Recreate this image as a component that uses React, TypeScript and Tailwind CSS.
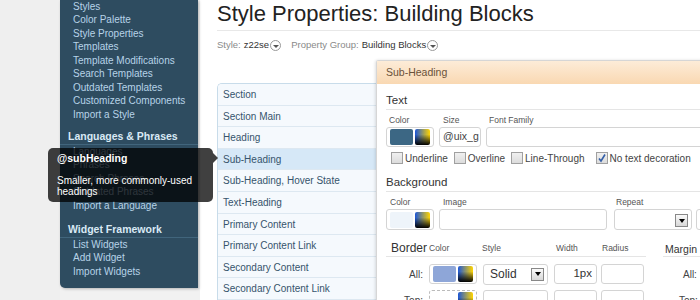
const groupOne = [
  "Styles",
  "Color Palette",
  "Style Properties",
  "Templates",
  "Template Modifications",
  "Search Templates",
  "Outdated Templates",
  "Customized Components",
  "Import a Style",
];

const groupTwo = ["Languages", "Phrases", "Search Phrases", "Outdated Phrases", "Import a Language"];
const groupThree = ["List Widgets", "Add Widget", "Import Widgets"];

const blocks = [
  "Section",
  "Section Main",
  "Heading",
  "Sub-Heading",
  "Sub-Heading, Hover State",
  "Text-Heading",
  "Primary Content",
  "Primary Content Link",
  "Secondary Content",
  "Secondary Content Link",
];

function SideLink({ label }: { label: string }) {
  return <div className="h-[13.5px] leading-[13.5px] pl-[13px] text-[10px] text-[#b7d3e8] whitespace-nowrap">{label}</div>;
}

function SideHeading({ label, top }: { label: string; top: string }) {
  return (
    <div className={`${top} pb-[1px] pl-[8px] border-b border-[#41657c] text-[10.5px] leading-[14px] font-bold text-[#d9e9f5] whitespace-nowrap`}>
      {label}
    </div>
  );
}

function Picker() {
  return (
    <span className="w-[15px] h-[16px] rounded-[2px] bg-[linear-gradient(180deg,transparent_35%,#000_100%),linear-gradient(90deg,#1b56d8,#ffd400)]" />
  );
}

function Swatch({ color, dashed }: { color: string; dashed?: boolean }) {
  return (
    <div
      className={`w-[48px] h-full flex items-center gap-[2px] px-[3px] rounded-[3px] bg-white ${
        dashed ? "border border-dashed border-[#bbb]" : "border border-[#d4d4d4]"
      }`}
    >
      <span className="flex-1 h-[16px] rounded-[2px]" style={{ background: color }} />
      <Picker />
    </div>
  );
}

function DropButton() {
  return (
    <span className="w-[13px] h-[13px] border border-[#888] bg-[linear-gradient(#fafafa,#d8d8d8)] flex items-center justify-center">
      <span className="w-0 h-0 border-l-[3.5px] border-r-[3.5px] border-t-[4px] border-l-transparent border-r-transparent border-t-black" />
    </span>
  );
}

function CircleArrow() {
  return (
    <span className="inline-flex w-[11px] h-[11px] rounded-full border border-[#999] items-center justify-center align-middle ml-[1px]">
      <span className="w-0 h-0 border-l-[3px] border-r-[3px] border-t-[3.5px] border-l-transparent border-r-transparent border-t-[#555] mt-[1px]" />
    </span>
  );
}

function Check({ label, checked }: { label: string; checked?: boolean }) {
  return (
    <div className="flex items-center gap-[2px]">
      <span className="w-[12px] h-[12px] border border-[#a0a0a0] bg-[linear-gradient(#f0f0f0,#dcdcdc)] flex items-center justify-center">
        {checked && (
          <svg width="10" height="10" viewBox="0 0 10 10">
            <path d="M2 5.5 L4 8 L8 1.5" stroke="#3560a8" strokeWidth="1.6" fill="none" />
          </svg>
        )}
      </span>
      <span className="text-[10px] text-[#444]">{label}</span>
    </div>
  );
}

export default function App() {
  return (
    <div className="relative w-[700px] h-[300px] overflow-hidden flex bg-white font-['Liberation_Sans',Arial,sans-serif]">
      <div className="w-[60px] shrink-0 bg-[#efefef]" />

      <aside className="w-[140px] shrink-0 bg-[#f1f1f1]">
        <div className="w-[138px] h-[288px] bg-[#2e4c60] rounded-bl-[5px] shadow-[1px_1px_3px_rgba(0,0,0,0.25)] overflow-hidden">
          <div className="-mt-[0.5px]">
            {groupOne.map((l) => (
              <SideLink key={l} label={l} />
            ))}
          </div>
          <SideHeading label="Languages & Phrases" top="pt-[7.5px]" />
          {groupTwo.map((l) => (
            <SideLink key={l} label={l} />
          ))}
          <SideHeading label="Widget Framework" top="pt-[9.5px]" />
          {groupThree.map((l) => (
            <SideLink key={l} label={l} />
          ))}
        </div>
      </aside>

      <main className="flex-1 min-w-0 pl-[17px]">
        <h1 className="h-[31px] border-b border-[#e8e8e8] text-[22px] leading-[28px] text-[#222] whitespace-nowrap">
          Style Properties: Building Blocks
        </h1>
        <div className="mt-[7px] h-[15px] flex items-center text-[9.5px] whitespace-nowrap">
          <span className="text-[#8a8a8a]">Style:</span>
          <span className="ml-[3px] text-[#333]">z22se</span>
          <CircleArrow />
          <span className="ml-[10px] text-[#8a8a8a]">Property Group:</span>
          <span className="ml-[3px] text-[#333]">Building Blocks</span>
          <CircleArrow />
        </div>

        <div className="mt-[7px] flex items-start">
          <ul className="mt-[23px] w-[159px] shrink-0 border border-r-0 border-[#c8dcea] rounded-tl-[5px] overflow-hidden">
            {blocks.map((b) => (
              <li
                key={b}
                className={`h-[21.6px] leading-[21px] pl-[5px] border-b border-[#dde8f1] text-[10px] whitespace-nowrap text-[#36546c] ${
                  b === "Sub-Heading" ? "bg-[#d6e8f7]" : "bg-[#f5f9fd]"
                }`}
              >
                {b}
              </li>
            ))}
          </ul>

          <section className="w-[330px] shrink-0 border-l border-t border-[#d6d6d6] rounded-tl-[3px] bg-white shadow-[-1px_0_3px_rgba(0,0,0,0.12)] h-[260px]">
            <div className="h-[23px] pl-[9px] flex items-center text-[10.5px] text-[#6a5139] bg-[linear-gradient(#fdecd8,#f9d8b2)]">
              Sub-Heading
            </div>
            <div className="pl-[9px]">
              <div className="pt-[9px] pb-[2px] border-b border-[#e5e5e5] text-[11.5px] leading-[14px] text-[#333]">Text</div>
              <div className="mt-[5px] flex h-[10px] items-center text-[8.5px] text-[#555]">
                <span className="ml-[3px] w-[54px]">Color</span>
                <span className="w-[46px]">Size</span>
                <span>Font Family</span>
              </div>
              <div className="mt-[2px] flex h-[20px] gap-[5px]">
                <Swatch color="#3c6784" />
                <div className="w-[42px] border border-[#d4d4d4] rounded-[3px] flex items-center pl-[3px] text-[10.5px] text-[#444] overflow-hidden whitespace-nowrap">
                  @uix_g
                </div>
                <div className="flex-1 border border-[#d4d4d4] rounded-[3px]" />
              </div>
              <div className="mt-[5px] flex h-[12px] items-center pl-[5px]">
                <Check label="Underline" />
                <div className="ml-[6px]">
                  <Check label="Overline" />
                </div>
                <div className="ml-[6px]">
                  <Check label="Line-Through" />
                </div>
                <div className="ml-[11px]">
                  <Check label="No text decoration" checked />
                </div>
              </div>

              <div className="mt-[11px] pb-[2px] border-b border-[#e5e5e5] text-[11.5px] leading-[14px] text-[#333]">Background</div>
              <div className="mt-[5px] flex h-[10px] items-center text-[8.5px] text-[#555]">
                <span className="ml-[4px] w-[53px]">Color</span>
                <span className="w-[173px]">Image</span>
                <span>Repeat</span>
              </div>
              <div className="mt-[2px] flex h-[21px]">
                <Swatch color="#eef4fa" />
                <div className="ml-[5px] w-[168px] border border-[#d4d4d4] rounded-[3px]" />
                <div className="ml-[7px] w-[78px] border border-[#d4d4d4] rounded-[3px] flex items-end justify-end pr-[3px] pb-[2px]">
                  <DropButton />
                </div>
                <div className="ml-[4px] flex-1 border border-[#d4d4d4] rounded-[3px]" />
              </div>

              <div className="mt-[12px] flex">
                <div className="w-[260px]">
                  <div className="flex items-end h-[15px] pb-[1px] border-b border-[#e5e5e5] text-[8.5px] text-[#555]">
                    <span className="ml-[5px] w-[38px] text-[12px] leading-[14px] text-[#333]">Border</span>
                    <span className="w-[53px]">Color</span>
                    <span className="w-[74px]">Style</span>
                    <span className="w-[46px]">Width</span>
                    <span>Radius</span>
                  </div>
                  <div className="mt-[7px] flex h-[20px] items-center">
                    <span className="w-[37px] text-right text-[10px] text-[#444]">All:</span>
                    <div className="ml-[6px] h-full">
                      <Swatch color="#8ea6d8" />
                    </div>
                    <div className="ml-[6px] w-[65px] h-[21px] border border-[#d4d4d4] rounded-[3px] flex items-center justify-between pl-[6px] pr-[3px] text-[12px] text-[#333]">
                      Solid
                      <DropButton />
                    </div>
                    <div className="ml-[6px] w-[43px] h-full border border-[#d4d4d4] rounded-[3px] flex items-center justify-end pr-[4px] text-[11.5px] text-[#333]">
                      1px
                    </div>
                    <div className="ml-[4px] w-[43px] h-full border border-[#d4d4d4] rounded-[3px]" />
                  </div>
                  <div className="mt-[6px] flex h-[20px] items-center">
                    <span className="w-[37px] text-right text-[10px] text-[#444]">Top:</span>
                    <div className="ml-[6px] h-full">
                      <Swatch color="transparent" dashed />
                    </div>
                    <div className="ml-[6px] w-[65px] h-full border border-[#d4d4d4] rounded-[3px]" />
                    <div className="ml-[6px] w-[43px] h-full border border-[#d4d4d4] rounded-[3px]" />
                    <div className="ml-[4px] w-[43px] h-full border border-[#d4d4d4] rounded-[3px]" />
                  </div>
                </div>
                <div className="ml-[17px] flex-1">
                  <div className="h-[15px] pb-[1px] border-b border-[#e5e5e5] pl-[2px] text-[10.5px] leading-[14px] text-[#333] whitespace-nowrap">Margin</div>
                  <div className="mt-[7px] h-[20px] flex items-center pl-[20px] text-[10px] text-[#444]">All:</div>
                  <div className="mt-[6px] h-[20px] flex items-center pl-[16px] text-[10px] text-[#444]">Top:</div>
                </div>
              </div>
            </div>
          </section>
        </div>
      </main>

      <div className="absolute left-[48px] top-[148px] w-[165px] h-[54px] rounded-[5px] bg-black/75 px-[9px] pt-[3px] text-white">
        <div className="text-[10.5px] font-bold leading-[14px]">@subHeading</div>
        <div className="mt-[10px] text-[10px] leading-[11px]">
          Smaller, more commonly-used
          <br />
          headings
        </div>
        <span className="absolute right-[-5px] top-[5px] w-0 h-0 border-t-[5px] border-b-[5px] border-l-[5px] border-t-transparent border-b-transparent border-l-black/75" />
      </div>
    </div>
  );
}
